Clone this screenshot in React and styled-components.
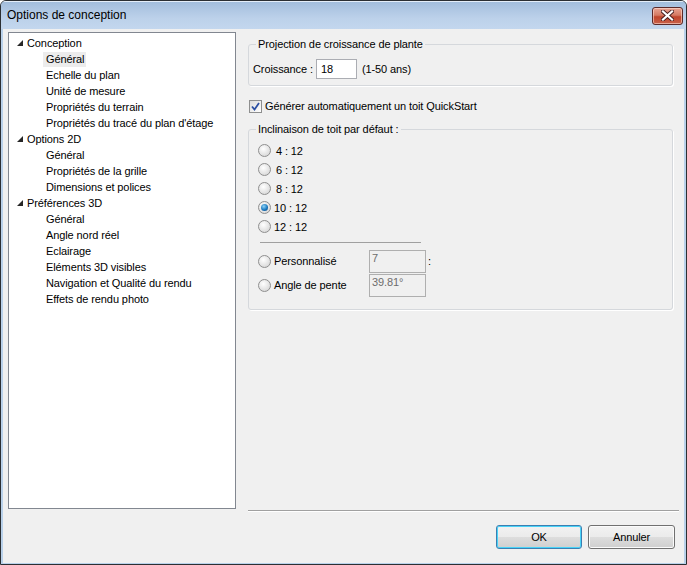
import React from "react";
import styled, { createGlobalStyle } from "styled-components";

const Global = createGlobalStyle`
  html, body { margin: 0; padding: 0; background: #ffffff; }
  body { font-family: "Liberation Sans", Arial, sans-serif; font-size: 11px; color: #000; }
  * { box-sizing: border-box; }
`;

const Window = styled.div`
  width: 687px;
  height: 565px;
  display: flex;
  flex-direction: column;
  border: 1px solid #2b2f33;
  border-radius: 6px 6px 0 0;
  background: #b9d1ea;
  overflow: hidden;
`;

const TitleBar = styled.div`
  height: 28px;
  flex: none;
  display: flex;
  align-items: center;
  justify-content: space-between;
  padding: 0 3px 2px 6px;
  background: linear-gradient(#a3bedd, #bcd1ea 60%, #c3d7ee);
  border-top: 1px solid #e4eef9;
`;

const TitleText = styled.span`
  font-family: "Liberation Sans", Arial, sans-serif;
  font-size: 12px;
  color: #000;
`;

const CloseButton = styled.div`
  width: 31px;
  height: 18px;
  margin-top: 2px;
  border: 1px solid #5b2a2a;
  border-radius: 3px;
  background: linear-gradient(#e8a493, #d57a63 45%, #c0452c 55%, #c8614a);
  box-shadow: inset 0 0 0 1px rgba(255, 220, 210, 0.6);
  display: flex;
  align-items: center;
  justify-content: center;
`;

const Body = styled.div`
  flex: 1;
  margin: 0 2px 1px 2px;
  background: #f0f0f0;
  display: flex;
  flex-direction: column;
  padding: 3px 0 0 5px;
  letter-spacing: -0.1px;
`;

const Main = styled.div`
  display: flex;
  gap: 11px;
`;

const Tree = styled.div`
  width: 228px;
  height: 477px;
  flex: none;
  background: #fff;
  border: 1px solid #828790;
  padding: 2px 0 0 0;
`;

const TreeRow = styled.div`
  height: 16px;
  display: flex;
  align-items: center;
  padding-left: ${(p) => (p.$child ? 34 : 8)}px;
`;

const Expander = styled.span`
  width: 6px;
  display: flex;
  align-items: center;
  margin-right: 4px;
`;

const TreeLabel = styled.span`
  padding: ${(p) => (p.$parent ? "0" : "1px 2px 1px 3px")};
  line-height: 13px;
  background: ${(p) => (p.$selected ? "#ececec" : "transparent")};
`;

const Right = styled.div`
  width: 430px;
  display: flex;
  flex-direction: column;
  padding-top: 4px;
`;

const Group = styled.fieldset`
  margin: ${(p) => p.$mt || 0}px 4px 0 1px;
  border: 1px solid #d5d8dc;
  border-radius: 3px;
  box-shadow: 1px 1px 0 #fff;
  padding: 0;
  min-width: 0;
`;

const Legend = styled.legend`
  padding: 0 2px;
  margin-left: 7px;
  line-height: 13px;
`;

const GroupContent = styled.div`
  padding: ${(p) => p.$pad};
`;

const GrowthRow = styled.div`
  display: flex;
  align-items: center;
  height: 20px;
`;

const TextInput = styled.div`
  width: ${(p) => p.$w}px;
  height: ${(p) => p.$h}px;
  border: 1px solid ${(p) => (p.$disabled ? "#afafaf" : "#abadb3")};
  background: ${(p) => (p.$disabled ? "#f0f0f0" : "#fff")};
  color: ${(p) => (p.$disabled ? "#6d6d6d" : "#000")};
  padding: ${(p) => (p.$disabled ? "1px 0 0 2px" : "3px 0 0 4px")};
  line-height: 13px;
  margin-left: ${(p) => p.$ml || 0}px;
`;

const CheckRow = styled.label`
  display: flex;
  align-items: center;
  gap: 3px;
  margin: 13px 0 0 2px;
  height: 14px;
`;

const CheckBox = styled.span`
  width: 13px;
  height: 13px;
  border: 1px solid #8e8f8f;
  background: linear-gradient(135deg, #dcdcdc, #ffffff);
  display: flex;
  align-items: center;
  justify-content: center;
`;

const RadioList = styled.div`
  display: flex;
  flex-direction: column;
`;

const RadioRow = styled.div`
  display: flex;
  align-items: center;
  height: ${(p) => p.$h || 19}px;
`;

const RadioDot = styled.span`
  width: 13px;
  height: 13px;
  border-radius: 50%;
  border: 1px solid #8f8f8f;
  background: radial-gradient(circle at 40% 35%, #ffffff, #e2e2e2 60%, #cfcfcf);
  display: flex;
  align-items: center;
  justify-content: center;
  flex: none;
  margin-right: ${(p) => p.$gap}px;
`;

const RadioInner = styled.span`
  width: 7px;
  height: 7px;
  border-radius: 50%;
  background: radial-gradient(circle at 40% 35%, #8fd3f6, #1b7ac0 55%, #0b3e78);
`;

const Separator = styled.div`
  width: 161px;
  height: 1px;
  background: #a0a0a0;
  margin: 6px 0 6px 2px;
`;

const OptionLabel = styled.span`
  width: ${(p) => p.$w};
  display: inline-block;
`;

const Colon = styled.span`
  margin-left: 2px;
`;

const Footer = styled.div`
  display: flex;
  flex-direction: column;
  align-items: flex-end;
`;

const FooterLine = styled.div`
  width: 431px;
  height: 1px;
  background: #a0a0a0;
  margin: 1px 5px 0 0;
  box-shadow: 0 1px 0 #fff;
`;

const Buttons = styled.div`
  display: flex;
  gap: 6px;
  margin: 14px 9px 0 0;
`;

const Button = styled.div`
  width: ${(p) => p.$w}px;
  height: 24px;
  border: 1px solid ${(p) => (p.$default ? "#3c7fb1" : "#707070")};
  border-radius: 3px;
  background: linear-gradient(#f2f2f2, #ebebeb 50%, #dddddd 51%, #cfcfcf);
  box-shadow: inset 0 0 0 1px ${(p) => (p.$default ? "#48d3f8" : "#fbfbfb")};
  display: flex;
  align-items: center;
  justify-content: center;
`;

const tree = [
  { label: "Conception", children: ["Général", "Echelle du plan", "Unité de mesure", "Propriétés du terrain", "Propriétés du tracé du plan d'étage"] },
  { label: "Options 2D", children: ["Général", "Propriétés de la grille", "Dimensions et polices"] },
  { label: "Préférences 3D", children: ["Général", "Angle nord réel", "Eclairage", "Eléments 3D visibles", "Navigation et Qualité du rendu", "Effets de rendu photo"] },
];

const pitches = [
  { label: "\u00a04 : 12" },
  { label: "\u00a06 : 12" },
  { label: "\u00a08 : 12" },
  { label: "10 : 12", checked: true },
  { label: "12 : 12" },
];

const Triangle = () => (
  <svg width="6" height="6" viewBox="0 0 6 6">
    <polygon points="6,0 6,6 0,6" fill="#262626" />
  </svg>
);

const Radio = ({ checked, gap }) => (
  <RadioDot $gap={gap}>{checked && <RadioInner />}</RadioDot>
);

export default function App() {
  return (
    <>
      <Global />
      <Window>
        <TitleBar>
          <TitleText>Options de conception</TitleText>
          <CloseButton>
            <svg width="13" height="11" viewBox="0 0 13 11">
              <path d="M2 1.5 L11 9.5 M11 1.5 L2 9.5" stroke="#4a2020" strokeWidth="4" strokeLinecap="square" />
              <path d="M2 1.5 L11 9.5 M11 1.5 L2 9.5" stroke="#ffffff" strokeWidth="2.2" strokeLinecap="square" />
            </svg>
          </CloseButton>
        </TitleBar>
        <Body>
          <Main>
            <Tree>
              {tree.map((g) => (
                <React.Fragment key={g.label}>
                  <TreeRow>
                    <Expander><Triangle /></Expander>
                    <TreeLabel $parent>{g.label}</TreeLabel>
                  </TreeRow>
                  {g.children.map((c, i) => (
                    <TreeRow $child key={g.label + c}>
                      <TreeLabel $selected={g.label === "Conception" && i === 0}>{c}</TreeLabel>
                    </TreeRow>
                  ))}
                </React.Fragment>
              ))}
            </Tree>
            <Right>
              <Group $mt={2}>
                <Legend>Projection de croissance de plante</Legend>
                <GroupContent $pad="8px 0 6px 4px">
                  <GrowthRow>
                    <span>Croissance :</span>
                    <TextInput $w={41} $h={20} $ml={3}>18</TextInput>
                    <span style={{ marginLeft: 5 }}>(1-50 ans)</span>
                  </GrowthRow>
                </GroupContent>
              </Group>
              <CheckRow>
                <CheckBox>
                  <svg width="9" height="9" viewBox="0 0 9 9">
                    <path d="M1 4.5 L3.5 7.5 L8 1" stroke="#2b4fa3" strokeWidth="1.8" fill="none" />
                  </svg>
                </CheckBox>
                <span>Générer automatiquement un toit QuickStart</span>
              </CheckRow>
              <Group $mt={10}>
                <Legend>Inclinaison de toit par défaut :</Legend>
                <GroupContent $pad="5px 0 12px 9px">
                  <RadioList>
                    {pitches.map((p) => (
                      <RadioRow key={p.label} $h={19}>
                        <Radio checked={p.checked} gap={p.label.startsWith("1") ? 3 : 2} />
                        <span>{p.label}</span>
                      </RadioRow>
                    ))}
                    <Separator />
                    <RadioRow $h={24}>
                      <Radio gap={3} />
                      <OptionLabel $w="95px">Personnalisé</OptionLabel>
                      <TextInput $w={57} $h={23} $disabled>7</TextInput>
                      <Colon>:</Colon>
                    </RadioRow>
                    <RadioRow $h={24}>
                      <Radio gap={3} />
                      <OptionLabel $w="95px">Angle de pente</OptionLabel>
                      <TextInput $w={57} $h={23} $disabled>39.81°</TextInput>
                    </RadioRow>
                  </RadioList>
                </GroupContent>
              </Group>
            </Right>
          </Main>
          <Footer>
            <FooterLine />
            <Buttons>
              <Button $w={86} $default>OK</Button>
              <Button $w={87}>Annuler</Button>
            </Buttons>
          </Footer>
        </Body>
      </Window>
    </>
  );
}
